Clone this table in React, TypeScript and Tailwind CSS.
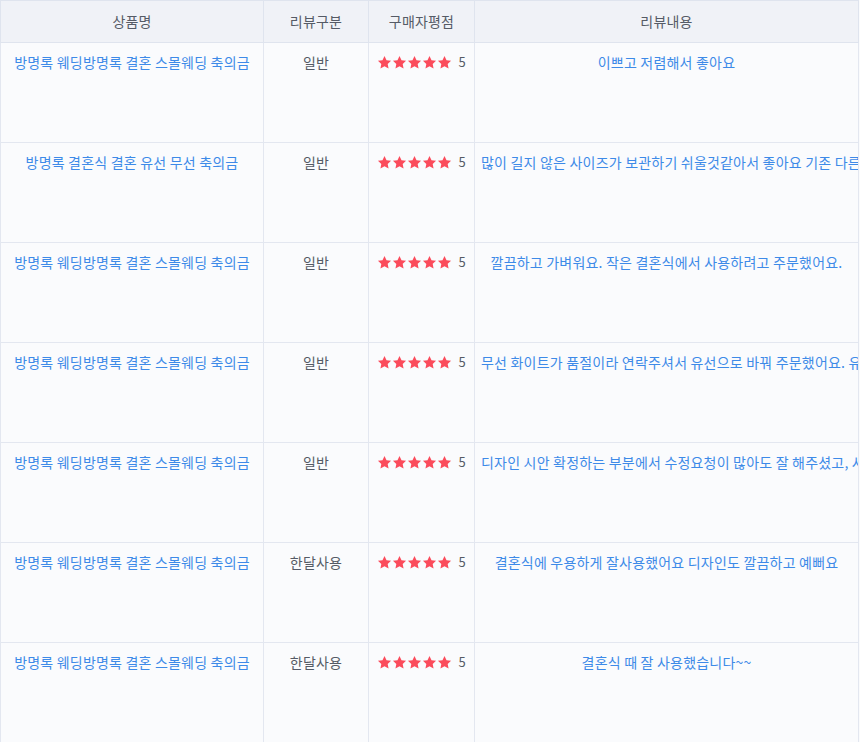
import React from "react";

type Review = {
  product: string;
  kind: string;
  rating: number;
  content: string;
};

const reviews: Review[] = [
  { product: "방명록 웨딩방명록 결혼 스몰웨딩 축의금", kind: "일반", rating: 5, content: "이쁘고 저렴해서 좋아요" },
  { product: "방명록 결혼식 결혼 유선 무선 축의금", kind: "일반", rating: 5, content: "많이 길지 않은 사이즈가 보관하기 쉬울것같아서 좋아요 기존 다른 제품보다 훨씬 깔끔하고 예뻐요" },
  { product: "방명록 웨딩방명록 결혼 스몰웨딩 축의금", kind: "일반", rating: 5, content: "깔끔하고 가벼워요. 작은 결혼식에서 사용하려고 주문했어요." },
  { product: "방명록 웨딩방명록 결혼 스몰웨딩 축의금", kind: "일반", rating: 5, content: "무선 화이트가 품절이라 연락주셔서 유선으로 바꿔 주문했어요. 유선도 충분히 예쁘고 좋아요" },
  { product: "방명록 웨딩방명록 결혼 스몰웨딩 축의금", kind: "일반", rating: 5, content: "디자인 시안 확정하는 부분에서 수정요청이 많아도 잘 해주셨고, 사장님이 친절하셔서 좋았어요" },
  { product: "방명록 웨딩방명록 결혼 스몰웨딩 축의금", kind: "한달사용", rating: 5, content: "결혼식에 우용하게 잘사용했어요 디자인도 깔끔하고 예뻐요" },
  { product: "방명록 웨딩방명록 결혼 스몰웨딩 축의금", kind: "한달사용", rating: 5, content: "결혼식 때 잘 사용했습니다~~" },
];

const Star: React.FC = () => (
  <svg width="15" height="15" viewBox="0 0 24 24" className="shrink-0">
    <path
      d="M12 1.5l3.2 6.7 7.3.9-5.4 5.1 1.4 7.3L12 18l-6.5 3.5 1.4-7.3-5.4-5.1 7.3-.9z"
      fill="#fb4b5b"
    />
  </svg>
);

export default function App() {
  return (
    <div
      className="w-[860px] h-[742px] overflow-hidden bg-[#fafbfd]"
      style={{ fontFamily: '"Noto Sans CJK KR", "Noto Sans", sans-serif' }}
    >
      <table className="w-[859px] table-fixed border-collapse text-[14px] tracking-[0.2px]">
        <colgroup>
          <col className="w-[263px]" />
          <col className="w-[105px]" />
          <col className="w-[106px]" />
          <col />
        </colgroup>
        <thead>
          <tr className="h-[42px] bg-[#f0f2f7] text-[#555b66]">
            <th className="border border-[#dfe4ee] font-normal">상품명</th>
            <th className="border border-[#dfe4ee] font-normal">리뷰구분</th>
            <th className="border border-[#dfe4ee] font-normal">구매자평점</th>
            <th className="border border-[#dfe4ee] font-normal">리뷰내용</th>
          </tr>
        </thead>
        <tbody>
          {reviews.map((r, i) => (
            <tr key={i} className="h-[100px] align-top">
              <td className="border border-[#e3e7f0] px-1 pt-[9px] text-center text-[#3d8ae8] whitespace-nowrap overflow-hidden leading-[20px]">
                {r.product}
              </td>
              <td className="border border-[#e3e7f0] pt-[9px] text-center text-[#555b66] leading-[20px]">
                {r.kind}
              </td>
              <td className="border border-[#e3e7f0] pt-[9px] leading-[20px]">
                <div className="flex items-center justify-center h-[20px] tracking-normal">
                  {Array.from({ length: r.rating }).map((_, j) => (
                    <Star key={j} />
                  ))}
                  <span className="ml-[6px] text-[13px] text-[#555b66]">{r.rating}</span>
                </div>
              </td>
              <td className="border border-[#e3e7f0] px-[6px] pt-[9px] text-center text-[#3d8ae8] whitespace-nowrap overflow-hidden leading-[20px]">
                {r.content}
              </td>
            </tr>
          ))}
        </tbody>
      </table>
    </div>
  );
}
